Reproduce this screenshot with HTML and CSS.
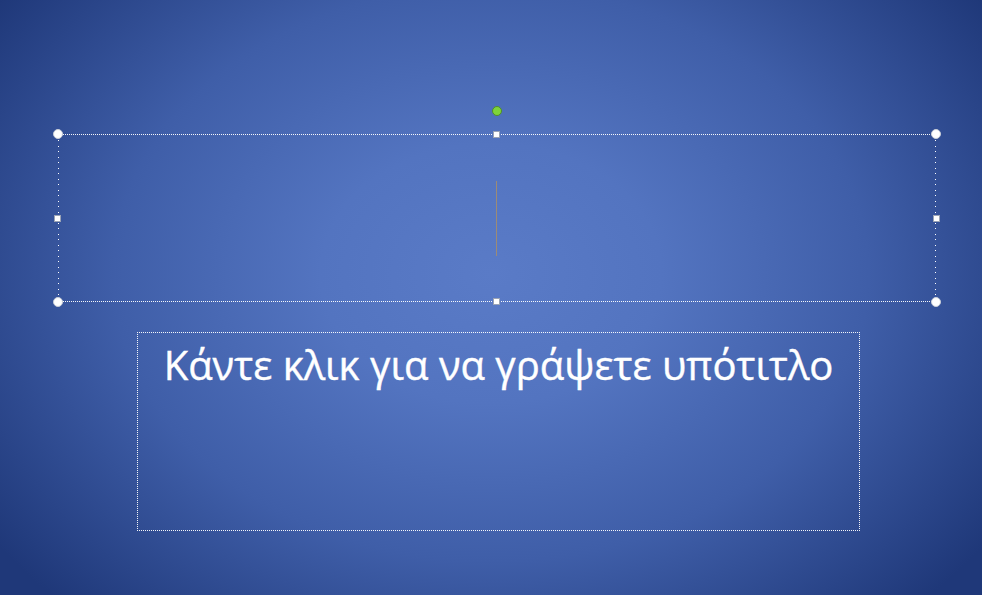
FILE: index.html
```html
<!DOCTYPE html>
<html lang="el">
<head>
<meta charset="utf-8">
<title>Slide</title>
<link rel="stylesheet" href="styles.css">
</head>
<body>
<div class="slide">
  <div class="title-box">
    <span class="vline vline-left"></span>
    <span class="vline vline-right"></span>
    <span class="caret"></span>
    <span class="rotate"></span>
    <span class="h corner tl"></span>
    <span class="h corner tr"></span>
    <span class="h corner bl"></span>
    <span class="h corner br"></span>
    <span class="h side tm"></span>
    <span class="h side bm"></span>
    <span class="h side ml"></span>
    <span class="h side mr"></span>
  </div>
  <div class="subtitle-box">
    <p class="subtitle">Κάντε κλικ για να γράψετε υπότιτλο</p>
  </div>
</div>
</body>
</html>
```
FILE: styles.css
```css
html, body {
  margin: 0;
  padding: 0;
}
body {
  width: 982px;
  height: 595px;
  overflow: hidden;
  font-family: "Open Sans", "Noto Sans", sans-serif;
}
.slide {
  width: 982px;
  height: 595px;
  box-sizing: border-box;
  padding-top: 134px;
  background: radial-gradient(ellipse 62% 78% at 50% 46%, #5a7bc7 0%, #5374c0 28%, #3f5ea8 62%, #1f3879 100%);
}
.title-box {
  position: relative;
  margin-left: 58px;
  width: 878px;
  height: 168px;
  border-top: 1px dotted rgba(255,255,255,0.95);
  border-bottom: 1px dotted rgba(255,255,255,0.95);
  box-sizing: border-box;
}
.vline {
  position: absolute;
  top: 0;
  bottom: 0;
  width: 1px;
  background: repeating-linear-gradient(to bottom, #ffffff 0 1px, transparent 1px 5px, #ffffff 5px 6px, transparent 6px 11px);
}
.vline-left { left: 0; }
.vline-right { right: 0; }
.caret {
  position: absolute;
  left: 438px;
  top: 46px;
  width: 1px;
  height: 75px;
  background: #9c8b76;
}
.rotate {
  position: absolute;
  left: 434px;
  top: -29px;
  width: 8px;
  height: 8px;
  border-radius: 50%;
  background: #7ed33a;
  border: 1px solid #4f8d2a;
}
.h {
  position: absolute;
  background: #ffffff;
  box-sizing: border-box;
}
.corner {
  width: 10px;
  height: 10px;
  border-radius: 50%;
  border: 1px solid #c9ced8;
}
.side {
  width: 7px;
  height: 7px;
  border: 1px solid #9aa3b5;
}
.tl { left: -5px; top: -6px; }
.tr { right: -5px; top: -6px; }
.bl { left: -5px; bottom: -6px; }
.br { right: -5px; bottom: -6px; }
.tm { left: 435px; top: -4px; }
.bm { left: 435px; bottom: -4px; }
.ml { left: -4px; top: 80px; }
.mr { right: -4px; top: 80px; }
.subtitle-box {
  margin-top: 30px;
  margin-left: 137px;
  width: 723px;
  height: 199px;
  box-sizing: border-box;
  border: 1px dotted rgba(255,255,255,0.95);
}
.subtitle {
  margin: 6px 0 0;
  text-align: center;
  color: #ffffff;
  font-size: 40px;
  line-height: 52px;
  letter-spacing: 0;
  -webkit-text-stroke: 0.4px #ffffff;
}
```
